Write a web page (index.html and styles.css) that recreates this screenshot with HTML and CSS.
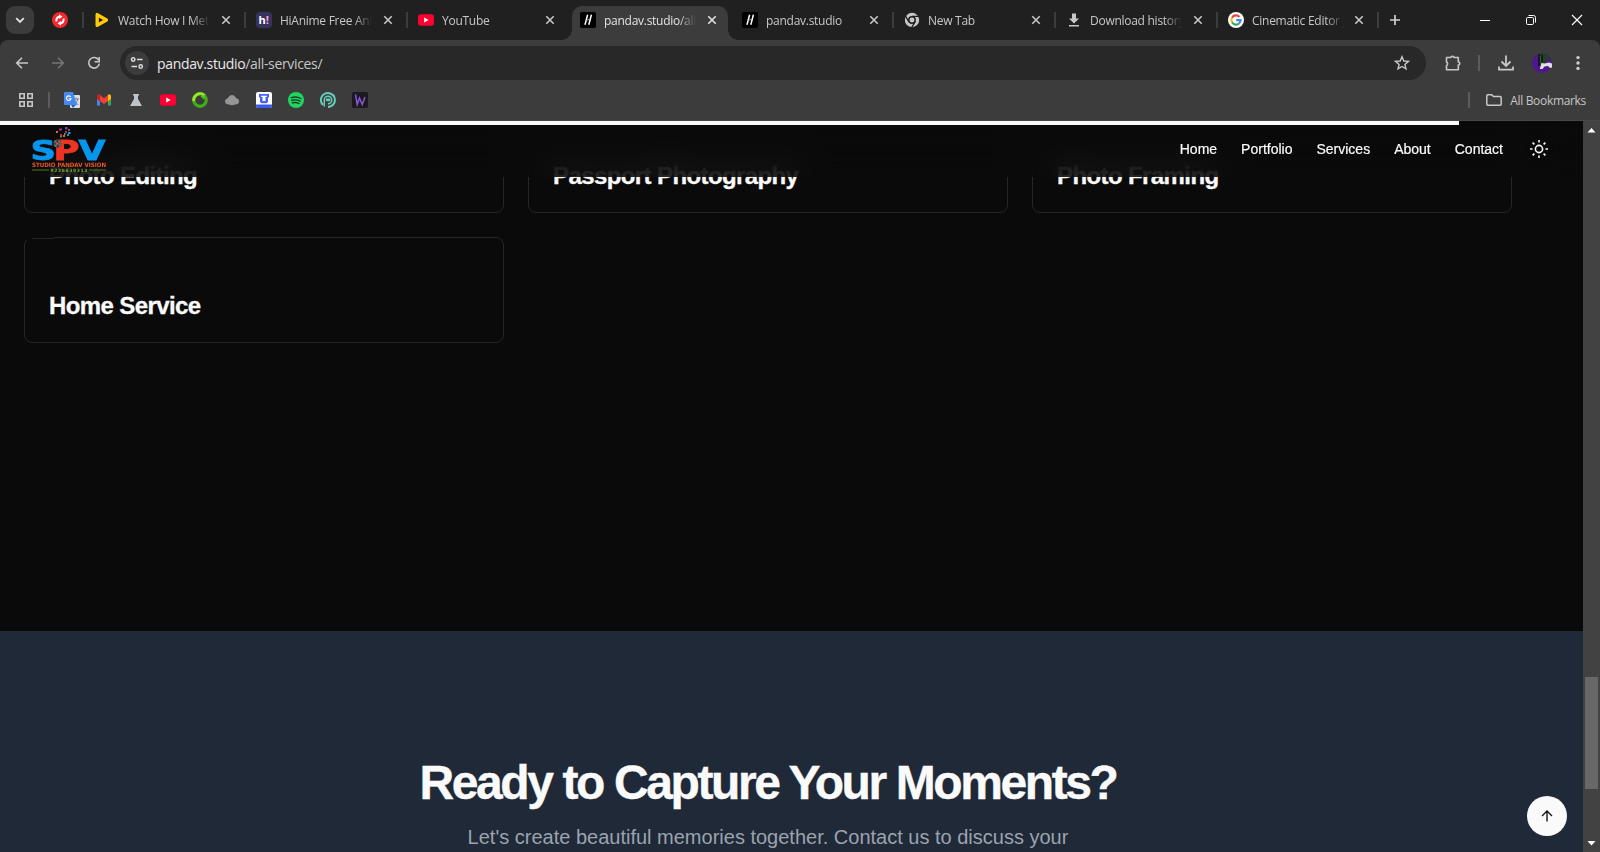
FILE: index.html
```html
<!DOCTYPE html>
<html lang="en">
<head>
<meta charset="utf-8">
<title>pandav.studio/all-services/</title>
<link rel="stylesheet" href="styles.css">
</head>
<body>
<svg class="defs" width="0" height="0">
  <symbol id="x" viewBox="0 0 16 16"><path d="M4.3 4.3l7.4 7.4M11.7 4.3l-7.4 7.4" stroke="currentColor" stroke-width="1.6" fill="none"/></symbol>
  <symbol id="pandav" viewBox="0 0 16 16"><rect width="16" height="16" rx="2" fill="#000"/><path d="M7.600 2.800L5 12.800M11.400 2.800L8.800 12.800" stroke="#fff" stroke-width="1.500" fill="none"/><path d="M6 8.600l4-1.600" stroke="#bbb" stroke-width=".8"/></symbol>
  <symbol id="youtube" viewBox="0 0 16 16"><rect y="2.2" width="16" height="11.6" rx="3" fill="#ff0033"/><path d="M6.2 5.5v5L10.700 8z" fill="#fff"/></symbol>
</svg>

<div class="tabs">
  <div class="tab-search"><svg width="12" height="12" viewBox="0 0 12 12"><path d="M2.200 4.200L6 8l3.800-3.800" stroke="#e3e3e3" stroke-width="1.800" fill="none"/></svg></div>
  <div class="pinned"><svg width="16" height="16" viewBox="0 0 16 16"><circle cx="8" cy="8" r="8" fill="#f5282d"/><path d="M4.500 9.500A3.800 3.800 0 0 1 7.500 4.600M11.500 6.500A3.800 3.800 0 0 1 8.500 11.400" fill="none" stroke="#fff" stroke-width="2"/><path d="M7 2.200l3.500 2.600L7 7zM9 13.800l-3.500-2.600L9 9z" fill="#fff"/></svg></div>
  <div class="tab sep"><svg class="fav" viewBox="0 0 16 16"><path d="M3.200 2.600v10.800L12.400 8z" fill="none" stroke="#ffcb05" stroke-width="3.400" stroke-linejoin="round"/></svg><span class="label">Watch How I Met Your Mother</span><svg class="close"><use href="#x"/></svg></div>
  <div class="tab sep"><svg class="fav" viewBox="0 0 16 16"><rect width="16" height="16" rx="4" fill="#37335f"/><text x="2.500" y="12" class="hi" fill="#fff">h<tspan fill="#f3a9d0">!</tspan></text></svg><span class="label">HiAnime Free Anime</span><svg class="close"><use href="#x"/></svg></div>
  <div class="tab sep"><svg class="fav"><use href="#youtube"/></svg><span class="label">YouTube</span><svg class="close"><use href="#x"/></svg></div>
  <div class="tab active"><svg class="fav"><use href="#pandav"/></svg><span class="label">pandav.studio/all-services</span><svg class="close"><use href="#x"/></svg></div>
  <div class="tab"><svg class="fav"><use href="#pandav"/></svg><span class="label">pandav.studio</span><svg class="close"><use href="#x"/></svg></div>
  <div class="tab sep"><svg class="fav" viewBox="0 0 16 16"><circle cx="8" cy="8" r="7.200" fill="#c7c7c7"/><circle cx="8" cy="8" r="3.200" fill="#c7c7c7" stroke="#202020" stroke-width="1.500"/><path d="M8 4.400h7M4.900 9.800L1.500 4M11.100 9.800L7.600 15.500" stroke="#202020" stroke-width="1.300"/></svg><span class="label">New Tab</span><svg class="close"><use href="#x"/></svg></div>
  <div class="tab sep"><svg class="fav" viewBox="0 0 16 16"><path d="M6 2h4v5h3l-5 5-5-5h3zM3 13.500h10V15H3z" fill="#c7c7c7" transform="translate(0 -.5)"/></svg><span class="label">Download history</span><svg class="close"><use href="#x"/></svg></div>
  <div class="tab sep last"><svg class="fav" viewBox="0 0 16 16"><circle cx="8" cy="8" r="8" fill="#fff"/><g fill="none" stroke-width="2.200"><path d="M4 5.700A4.600 4.600 0 0 1 11.400 4.900" stroke="#ea4335"/><path d="M4 5.700a4.600 4.600 0 0 0 0 4.600" stroke="#fbbc05"/><path d="M4 10.300a4.600 4.600 0 0 0 7 1.200" stroke="#34a853"/><path d="M11 11.500A4.600 4.600 0 0 0 12.500 8.200H8.200" stroke="#4285f4"/></g></svg><span class="label">Cinematic Editor jobs</span><svg class="close"><use href="#x"/></svg></div>
  <div class="newtab sep"><svg width="16" height="16" viewBox="0 0 16 16"><path d="M8 3v10M3 8h10" stroke="#d0d0d0" stroke-width="1.700"/></svg></div>
  <div class="window">
    <svg width="12" height="12" viewBox="0 0 12 12"><path d="M1 6.500h10" stroke="#fff"/></svg>
    <svg width="12" height="12" viewBox="0 0 12 12"><g fill="none" stroke="#fff"><rect x="1.500" y="3.500" width="7" height="7" rx="1.200"/><path d="M3.500 1.500H8.500a2 2 0 0 1 2 2v5"/></g></svg>
    <svg width="12" height="12" viewBox="0 0 12 12"><path d="M1 1l10 10M11 1L1 11" stroke="#fff" stroke-width="1.100"/></svg>
  </div>
</div>

<div class="chrome">
  <div class="toolbar">
    <svg class="nav-icon back" viewBox="0 0 16 16"><path d="M14 8H3M8 2.700L2.700 8 8 13.300" stroke="#c7c7c7" stroke-width="1.600" fill="none"/></svg>
    <svg class="nav-icon fwd" viewBox="0 0 16 16"><path d="M2 8h11M8 2.700L13.300 8 8 13.300" stroke="#757575" stroke-width="1.600" fill="none"/></svg>
    <svg class="nav-icon reload" viewBox="0 0 16 16"><path d="M12.600 5A5.300 5.300 0 1 0 13.300 8.600" stroke="#c7c7c7" stroke-width="1.600" fill="none"/><path d="M13.200 2v4.700H8.600" stroke="#c7c7c7" stroke-width="1.600" fill="none"/></svg>
    <div class="omnibox">
      <div class="site"><svg width="14" height="14" viewBox="0 0 14 14"><g fill="none" stroke="#dcdcdc" stroke-width="1.500"><circle cx="3.200" cy="3.500" r="1.700"/><path d="M7 3.500h5.500M1.500 10.500H7"/><circle cx="10.700" cy="10.500" r="1.700"/></g></svg></div>
      <div class="url">pandav.studio<span>/all-services/</span></div>
      <svg class="star" viewBox="0 0 16 16"><path d="M8 1.700l1.800 4.300 4.600.4-3.500 3 1.100 4.500L8 11.500l-4 2.400 1.100-4.500-3.500-3 4.600-.4z" stroke="#c7c7c7" stroke-width="1.400" fill="none"/></svg>
    </div>
    <svg class="ext" viewBox="0 0 18 18"><path d="M2.500 3.500h4.500a1.500 1.300 0 0 1 3 0h4.300v4.500a1.500 1.500 0 0 1 0 3v4.800H2.500v-4.200a2 2 0 0 0 0-3.600z" stroke="#c7c7c7" stroke-width="1.600" fill="none" stroke-linejoin="round"/></svg>
    <i class="bar bar-tools"></i>
    <svg class="dl" viewBox="0 0 18 18"><path d="M9 1.500v10M4.500 7.500L9 12l4.500-4.500M2 12.500v3.200h14v-3.200" stroke="#c7c7c7" stroke-width="1.800" fill="none"/></svg>
    <svg class="avatar" viewBox="0 0 20 20"><circle cx="10" cy="10" r="10" fill="#4f1690"/><path d="M6 1l2-1h6l5 5-7 6-4 3z" fill="#2a3a2c"/><path d="M7 1v12M10 2v7" stroke="#0c130d" stroke-width="1.500"/><path d="M8.500 3v7" stroke="#1d7a2e" stroke-width=".8"/><path d="M8 15l1.500-5 3 .5 4.500-1 3 1v4l-2 .5-2-2-3.500.5-2 2.500H8z" fill="#e0dde4"/></svg>
    <svg class="menu" viewBox="0 0 4 16"><g fill="#d0d0d0"><circle cx="2" cy="2.600" r="1.700"/><circle cx="2" cy="8" r="1.700"/><circle cx="2" cy="13.400" r="1.700"/></g></svg>
  </div>
  <div class="bookmarks">
    <svg class="apps" viewBox="0 0 14 14"><g fill="none" stroke="#c7c7c7" stroke-width="1.600"><path d="M.8.8h4.400v4.400H.8zM8.800.8h4.400v4.400H8.800zM.8 8.800h4.400v4.400H.8zM8.800 8.800h4.400v4.400H8.800z"/></g></svg>
    <i class="bar"></i>
    <div class="marks">
      <svg viewBox="0 0 16 16"><rect x="6" y="3" width="10" height="13" rx="1" fill="#e0e0e0"/><path d="M9.500 7h5.500M12.200 5.500V7M10.200 12.500c2-1.500 3-3 3.500-5.500M10.500 8.500c1 2 2.500 3.500 4 4" stroke="#6d7f92" fill="none"/><path d="M0 1a1 1 0 0 1 1-1h8l4 13H1a1 1 0 0 1-1-1z" fill="#4688f4"/><path d="M7 13h5l-3 3z" fill="#2360c8"/><path d="M6.700 4.900A2.300 2.300 0 1 0 7 6.700H4.800" fill="none" stroke="#fff" stroke-width="1.100"/></svg>
      <svg viewBox="0 0 16 16"><path d="M1 4v9.500h3V6z" fill="#4285f4"/><path d="M12 6v7.500h3V4z" fill="#34a853"/><path d="M1 4.500V7l7 5 7-5V4.500C15 2.500 13 2 12 3L8 6.300 4 3C3 2 1 2.500 1 4.500z" fill="#ea4335"/><path d="M1 4.500V7l3 2.200V3C2.800 2 1 2.600 1 4.500z" fill="#c5221f"/><path d="M12 3v6.200L15 7V4.500C15 2.500 13 2 12 3z" fill="#fbbc04"/></svg>
      <svg viewBox="0 0 16 16"><path d="M5 2h6v1.500h-1V7l4 7H2l4-7V3.500H5z" fill="#bfc3c7"/></svg>
      <svg><use href="#youtube"/></svg>
      <svg viewBox="0 0 16 16"><circle cx="8" cy="8" r="6.300" fill="none" stroke="#43ad18" stroke-width="3.200"/><path d="M1.800 9A6.300 6.300 0 0 1 12.500 3.600" fill="none" stroke="#9be52c" stroke-width="2.800"/><path d="M8.500 4.300L13 2.800l-.8 5z" fill="#5cc421"/></svg>
      <svg viewBox="0 0 16 16"><path d="M3.500 12.200a2.900 2.900 0 0 1-.3-5.700C4.500 6.300 5 3 8 3s3.600 3.200 5 3.500a2.900 2.900 0 0 1-.5 5.700L8 13.300z" fill="#969696"/></svg>
      <svg viewBox="0 0 16 16"><rect width="16" height="16" rx="2" fill="#fff"/><path d="M0 12.500h16V14a2 2 0 0 1-2 2H2a2 2 0 0 1-2-2z" fill="#3c59e8"/><path d="M3 2h10v3.500h-1V10l-1.500 1.300h-5L4 10V5.500H3z" fill="#4662ef"/><path d="M5.200 3.800h5.600V5H9.500v4h-3V5H5.200z" fill="#fff"/></svg>
      <svg viewBox="0 0 16 16"><circle cx="8" cy="8" r="8" fill="#1ed760"/><path d="M3.200 5.600c3.500-1 6.800-.7 9.800.9M3.800 8.300c3-.8 5.800-.5 8.300.8M4.300 10.800c2.600-.6 4.800-.4 6.800.7" stroke="#1c3a26" stroke-width="1.400" fill="none" stroke-linecap="round"/></svg>
      <svg viewBox="0 0 16 16"><path d="M3 13A7 7 0 1 1 8 15" fill="none" stroke="#64cfbb" stroke-width="1.900"/><path d="M4.300 14.500V8A3.700 3.700 0 1 1 8 11.700" fill="none" stroke="#64cfbb" stroke-width="1.500"/><rect x="5.800" y="6.500" width="4.600" height="2.800" rx="1.400" fill="#64cfbb"/></svg>
      <svg viewBox="0 0 16 16"><rect width="16" height="16" rx="2" fill="#1b1a1e"/><path d="M3.500 2.500l1.700 10L7.500 6l2.700 6.500L13 5" fill="none" stroke="#8657d6" stroke-width="1.500"/></svg>
    </div>
    <div class="all"><i class="bar"></i><svg width="16" height="12" viewBox="0 0 16 12"><path d="M.8 1.800a1 1 0 0 1 1-1h4l1.600 1.700h6.800a1 1 0 0 1 1 1v6.700a1 1 0 0 1-1 1H1.800a1 1 0 0 1-1-1z" fill="none" stroke="#c7c7c7" stroke-width="1.500"/></svg><span>All Bookmarks</span></div>
  </div>
</div>

<div class="viewport">
  <div class="page">
    <div class="progress"></div>
    <header class="header">
      <svg class="logo" viewBox="0 0 76 50">
        <g><path d="M24 6h2v2h-2zM31 10h2v2h-2z" fill="#e8632a"/><path d="M27 3.500h3v2h-3zM33 2h2.500v2.500H33zM36 4h2v2h-2z" fill="#86439b"/><path d="M28 9h2v2h-2zM33 6h2v2h-2z" fill="#c9302c"/><path d="M36 7h2.500v2H36zM32 8h1.500v2H32z" fill="#1b9fe0"/><path d="M35 9h2v2h-2zM28 11h2v1.500h-2z" fill="#3b9a4a"/></g>
        <text class="brand" y="34.500" fill="#0796ee" stroke="#0796ee" x="-1.500" textLength="25.500" lengthAdjust="spacingAndGlyphs">S</text>
        <text class="brand" y="34.500" fill="#ee3424" stroke="#ee3424" x="21.500" textLength="26" lengthAdjust="spacingAndGlyphs">P</text>
        <text class="brand" y="34.500" fill="#0796ee" stroke="#0796ee" x="46.500" textLength="27" lengthAdjust="spacingAndGlyphs">V</text>
        <circle cx="25.200" cy="18.500" r="4" fill="#3b2740"/><circle cx="25.200" cy="18.500" r="3" fill="none" stroke="#4a9a55" stroke-width="1.500" stroke-dasharray="3 2"/><circle cx="25.200" cy="18.500" r="1.600" fill="#c94b6a"/>
        <text class="tag" x="0" y="42" textLength="74" lengthAdjust="spacingAndGlyphs" fill="#ee5527">STUDIO PANDAV VISION</text>
        <path d="M0 45h17M57 45h17" stroke="#4c7c25" stroke-width="1.200"/>
        <text class="phone" x="18.500" y="46.700" textLength="37" fill="#74a932">9226639313</text>
      </svg>
      <nav class="nav"><a>Home</a><a>Portfolio</a><a>Services</a><a>About</a><a>Contact</a></nav>
      <svg class="sun" viewBox="0 0 20 20"><g fill="none" stroke="#fafafa" stroke-width="1.600"><circle cx="10" cy="10" r="3.600"/><path d="M10 1v2.500M10 16.500V19M1 10h2.500M16.500 10H19M3.600 3.600l1.800 1.800M14.600 14.600l1.800 1.800M16.400 3.600l-1.800 1.800M5.400 14.600l-1.800 1.800"/></g></svg>
    </header>
    <main class="services">
      <article class="card">Photo Editing</article>
      <article class="card">Passport Photography</article>
      <article class="card">Photo Framing</article>
      <article class="card notch">Home Service</article>
    </main>
    <section class="cta">
      <div class="cta-inner">
        <h2>Ready to Capture Your Moments?</h2>
        <p>Let's create beautiful memories together. Contact us to discuss your</p>
      </div>
    </section>
    <div class="totop"><svg width="16" height="16" viewBox="0 0 16 16"><path d="M8 13.500V3M3 8l5-5 5 5" fill="none" stroke="#171717" stroke-width="1.400"/></svg></div>
  </div>
  <div class="scroll">
    <svg width="9" height="5" viewBox="0 0 9 5"><path d="M4.500 0L8.500 4.500H.5z" fill="#fff"/></svg>
    <div class="thumb"></div>
    <svg class="down" width="9" height="5" viewBox="0 0 9 5"><path d="M.5 0h8l-4 4.500z" fill="#fff"/></svg>
  </div>
</div>
</body>
</html>
```

FILE: styles.css
```css
* { box-sizing: border-box; }
body { margin: 0; width: 1600px; height: 852px; overflow: hidden; background: #202020; font-family: "Liberation Sans", Arial, sans-serif; display: flex; flex-direction: column; }
svg { display: block; flex: none; }
.defs { display: none; }

.tabs { height: 40px; flex: none; display: flex; background: #202020; color: #c7c7c7; font: 12px "Open Sans", "Noto Sans", sans-serif; }
.tab-search { width: 28px; height: 28px; margin: 6px 0 0 6px; border-radius: 9px; background: #3c3c3c; display: flex; align-items: center; justify-content: center; }
.pinned { width: 48px; padding: 12px 0 0 18px; }
.tab { width: 162px; height: 40px; padding: 0 10px 0 12px; display: flex; align-items: center; position: relative; }
.last { width: 161px; }
.last .close { margin-left: 7px; }
.sep::before { content: ""; position: absolute; left: 0; top: 12px; width: 2px; height: 16px; background: #3d3d3d; }
.fav { width: 16px; height: 16px; margin-right: 8px; }
.label { width: 92px; height: 20px; line-height: 20px; margin-top: 1px; flex: none; overflow: hidden; white-space: nowrap; letter-spacing: -0.27px; -webkit-mask-image: linear-gradient(90deg, #000 74px, transparent 92px); mask-image: linear-gradient(90deg, #000 74px, transparent 92px); }
.close { width: 16px; height: 16px; margin-left: 8px; color: #c7c7c7; }
.hi { font: bold 11px "Open Sans", sans-serif; }
.active { color: #e3e3e3; z-index: 0; }
.active .close { color: #e3e3e3; }
.active::before { content: ""; position: absolute; z-index: -1; left: 4px; width: 156px; top: 6px; height: 34px; border-radius: 10px 10px 0 0; background: #3c3c3c; }
.active::after { content: ""; position: absolute; z-index: -1; left: -6px; width: 176px; bottom: 0; height: 10px; background: radial-gradient(circle at 0 0, transparent 9.500px, #3c3c3c 10px) left / 10px 10px no-repeat, radial-gradient(circle at 100% 0, transparent 9.500px, #3c3c3c 10px) right / 10px 10px no-repeat; }
.newtab { position: relative; width: 97px; padding: 12px 0 0 10px; }
.window { display: flex; align-items: center; gap: 34px; padding-left: 5px; }

.chrome { height: 81px; flex: none; background: #3c3c3c; border-radius: 8px 8px 0 0; border-bottom: 1px solid #484848; }
.toolbar { height: 46px; display: flex; align-items: center; }
.nav-icon { width: 16px; height: 16px; }
.back { margin-left: 14px; }
.fwd { margin-left: 20px; }
.reload { margin-left: 20px; }
.omnibox { width: 1306px; height: 34px; margin-left: 18px; border-radius: 17px; background: #282828; display: flex; align-items: center; padding: 0 16px 0 5px; }
.site { width: 24px; height: 24px; border-radius: 50%; background: #3c3c3c; display: flex; align-items: center; justify-content: center; }
.url { margin-left: 8px; font: 14px "Open Sans", "Noto Sans", sans-serif; color: #e8e8e8; letter-spacing: -0.34px; }
.url span { color: #c7c7c7; }
.star { width: 16px; height: 16px; margin-left: auto; }
.ext { width: 18px; height: 18px; margin-left: 18px; }
.bar { width: 2px; height: 16px; background: #5c5c5c; }
.bar-tools { margin-left: 16px; }
.dl { width: 18px; height: 18px; margin-left: 17px; }
.avatar { width: 20px; height: 20px; margin-left: 17px; }
.menu { width: 4px; height: 16px; margin-left: 24px; }
.bookmarks { height: 28px; display: flex; align-items: center; padding: 0 14px 0 19px; }
.apps { width: 14px; height: 14px; margin-right: 15px; }
.marks { display: flex; gap: 16px; margin-left: 14px; }
.marks svg { width: 16px; height: 16px; }
.all { margin-left: auto; display: flex; align-items: center; gap: 16px; font: 12px "Open Sans", "Noto Sans", sans-serif; color: #c7c7c7; letter-spacing: -0.32px; }
.all span { margin-left: -8px; }

.viewport { flex: 1; display: flex; min-height: 0; }
.page { width: 1583px; position: relative; overflow: hidden; background: #0a0a0a; color: #fafafa; }
.progress { position: absolute; z-index: 3; left: 0; top: 0; width: 1459px; height: 4px; background: #fafafa; }
.header { position: absolute; z-index: 2; left: 0; top: 0; width: 100%; height: 56px; display: flex; align-items: center; padding: 0 34px 0 32px; background: rgba(10, 10, 10, 0.8); -webkit-backdrop-filter: blur(16px); backdrop-filter: blur(16px); }
.logo { width: 76px; height: 50px; margin-top: 2px; }
.brand { font: bold 27px "DejaVu Sans", sans-serif; stroke-width: 0.8px; }
.tag { font: bold 6px "DejaVu Sans", sans-serif; }
.phone { font: bold 4.5px "DejaVu Sans", sans-serif; }
.nav { display: flex; gap: 24px; margin-left: auto; font-size: 14px; line-height: 20px; -webkit-text-stroke: 0.2px #fafafa; }
.sun { width: 20px; height: 20px; margin-left: 26px; }
.services { display: grid; grid-template-columns: repeat(3, 480px); gap: 24px; margin: -14px 0 0 24px; height: 524px; align-content: start; }
.card { height: 106px; border: 1px solid #262626; border-radius: 8px; padding: 24px; display: flex; align-items: flex-end; font-size: 24px; line-height: 24px; font-weight: bold; letter-spacing: -0.6px; position: relative; -webkit-text-stroke: 0.3px #fafafa; }
.notch::before { content: ""; position: absolute; left: -1px; top: -1px; width: 30px; height: 3px; background: linear-gradient(90deg, transparent 7px, #262626 9px) 0 1px / 100% 1px no-repeat #0a0a0a; }
.cta { height: 221px; background: #1f2937; overflow: hidden; }
.cta-inner { width: 1536px; padding-top: 128px; text-align: center; }
.cta h2 { margin: 0; font-size: 48px; line-height: 48px; font-weight: bold; letter-spacing: -2.4px; -webkit-text-stroke: 0.4px #fafafa; }
.cta p { margin: 16px 0 0; font-size: 20px; line-height: 28px; color: #9ca3af; }
.totop { position: absolute; left: 1527px; top: 675px; width: 40px; height: 40px; border-radius: 50%; background: #fafafa; display: flex; align-items: center; justify-content: center; }
.scroll { width: 17px; background: #424242; display: flex; flex-direction: column; align-items: center; padding: 7px 0 6px; }
.thumb { width: 13px; height: 112px; margin-top: 544px; background: #686868; }
.down { margin-top: auto; }
```
